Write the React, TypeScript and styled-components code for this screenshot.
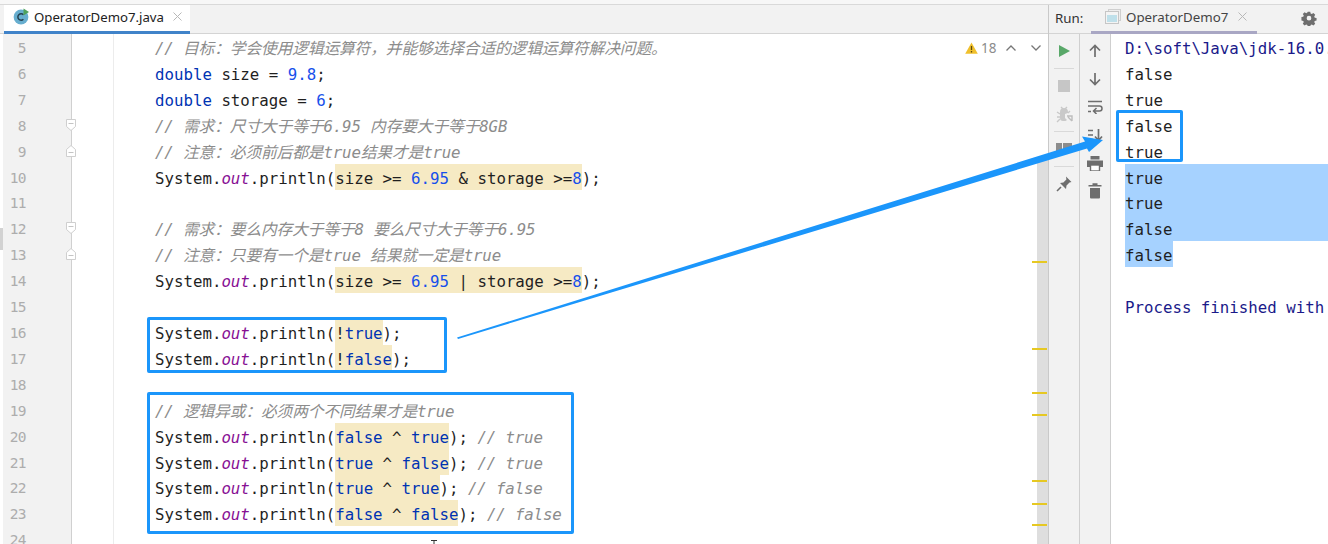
import React from "react";
import styled, { createGlobalStyle } from "styled-components";

const Global = createGlobalStyle`
  html, body { margin: 0; padding: 0; background: #fff; }
`;

const uiFont = `"Noto Sans", "Open Sans", sans-serif`;
const monoFont = `"DejaVu Sans Mono", "Noto Sans CJK SC", monospace`;
const blue = "#1b96fb";
const rowH = "25.92px";

const Page = styled.div`
  position: relative;
  width: 1328px;
  height: 544px;
  overflow: hidden;
  background: #fff;
  display: flex;
  flex-direction: column;
`;
const TopStrip = styled.div`
  height: 4px;
  flex: none;
  background: #f7f7f7;
  border-bottom: 1px solid #d9d9d9;
`;
const Panes = styled.div`
  flex: 1;
  display: flex;
  min-height: 0;
`;
const EditorPane = styled.section`
  position: relative;
  width: 1048px;
  flex: none;
  display: flex;
  flex-direction: column;
`;
const TabBar = styled.div`
  height: 29px;
  flex: none;
  box-sizing: border-box;
  padding-left: 4px;
  background: #f2f2f2;
  border-bottom: 1px solid #d4d4d4;
  display: flex;
`;
const FileTab = styled.div`
  width: 186px;
  height: 29px;
  box-sizing: border-box;
  padding: 0 7px 3px 9px;
  background: #fff;
  border-bottom: 3px solid #4083c9;
  display: flex;
  align-items: center;
  color: #222;
  font: 13.2px ${uiFont};
`;
const FileName = styled.span`
  margin-left: 4px;
  flex: 1;
`;
const EditorBody = styled.div`
  flex: 1;
  display: flex;
  min-height: 0;
  overflow: hidden;
`;
const LeftRail = styled.div`
  width: 3px;
  flex: none;
  padding-top: 194px;
`;
const RailGrip = styled.div`
  height: 22px;
  background: #d2d2d2;
`;
const Gutter = styled.div`
  width: 68px;
  flex: none;
  background: #f2f2f2;
  border-right: 1px solid #d0d0d0;
`;
const GutterRow = styled.div`
  position: relative;
  height: ${rowH};
  box-sizing: border-box;
  width: 23px;
  text-align: right;
  color: #adadad;
  font: 14.5px/28px ${monoFont};
  letter-spacing: -0.6px;
`;
const FoldMark = styled.svg`
  position: absolute;
  left: 62px;
  top: 6px;
`;
const Code = styled.div`
  position: relative;
  flex: 1;
  padding-left: 83px;
  font: 15.75px/29px ${monoFont};
  color: #1f1f1f;
  white-space: pre;
  &::before {
    content: "";
    position: absolute;
    left: 41px;
    top: 0;
    bottom: 0;
    width: 1px;
    background: #ececec;
  }
`;
const Line = styled.div`
  height: ${rowH};
`;
const Comment = styled.span`
  color: #8c8c8c;
  font-style: italic;
  letter-spacing: -0.15px;
`;
const Keyword = styled.span`
  color: #0033b3;
`;
const Num = styled.span`
  color: #1750eb;
`;
const Field = styled.span`
  color: #871094;
  font-style: italic;
`;
const Hl = styled.span`
  display: inline-block;
  height: 26px;
  background: #f6eac4;
`;
const Inspections = styled.div`
  position: absolute;
  top: 30px;
  left: 965px;
  height: 26px;
  display: flex;
  align-items: center;
  color: #8c8c8c;
  font: 13.5px ${uiFont};
`;
const WarnCount = styled.span`
  margin: 0 9px 0 3px;
`;
const Chevron = styled.svg`
  margin-right: 13px;
`;
const ScrollThumb = styled.div`
  position: absolute;
  top: 152px;
  bottom: 0;
  left: 1037px;
  width: 11px;
  background: #dedede;
`;
const Mark = styled.div<{ $y: number }>`
  position: absolute;
  left: 1032px;
  top: ${(p) => p.$y - 5}px;
  width: 15px;
  height: 2px;
  background: #e6c822;
`;
const RunPane = styled.section`
  flex: 1;
  min-width: 0;
  display: flex;
  flex-direction: column;
  border-left: 1px solid #c9c9c9;
`;
const RunHeader = styled.div`
  height: 29px;
  flex: none;
  box-sizing: border-box;
  padding-left: 6px;
  background: #f2f2f2;
  border-bottom: 1px solid #d4d4d4;
  display: flex;
  align-items: center;
  color: #333;
  font: 13.3px ${uiFont};
`;
const RunLabel = styled.span`
  width: 36px;
  padding-bottom: 2px;
`;
const RunTab = styled.div`
  width: 166px;
  height: 29px;
  box-sizing: border-box;
  padding: 0 9px 2px 14px;
  border-bottom: 3px solid #a9a7c4;
  display: flex;
  align-items: center;
  color: #444;
`;
const RunTabName = styled.span`
  margin-left: 5px;
  flex: 1;
`;
const Gear = styled.svg`
  margin-left: 44px;
  margin-bottom: 2px;
`;
const RunBody = styled.div`
  flex: 1;
  display: flex;
  min-height: 0;
`;
const ToolColumn = styled.div`
  width: 30px;
  flex: none;
  padding-top: 3px;
  background: #f2f2f2;
  border-right: 1px solid #cfcfcf;
`;
const ToolSlot = styled.div`
  height: 28px;
  display: flex;
  align-items: center;
  justify-content: center;
`;
const ToolSep = styled.div`
  height: 1px;
  margin: 3px 5px;
  background: #d9d9d9;
`;
const Console = styled.div`
  flex: 1;
  min-width: 0;
  padding-left: 14px;
  overflow: hidden;
  font: 15.75px/29px ${monoFont};
  color: #1f1f1f;
  white-space: pre;
`;
const ConsoleLine = styled.div<{ $sel?: boolean }>`
  height: ${rowH};
  background: ${(p) => (p.$sel ? "#a6d2ff" : "transparent")};
`;
const ConsoleLast = styled.div`
  height: ${rowH};
  width: 48px;
  background: #a6d2ff;
`;
const SystemLine = styled.div`
  height: ${rowH};
  color: #1a1a8a;
`;
const CalloutBox = styled.div<{ $x: number; $y: number; $w: number; $h: number }>`
  position: absolute;
  left: ${(p) => p.$x}px;
  top: ${(p) => p.$y}px;
  width: ${(p) => p.$w}px;
  height: ${(p) => p.$h}px;
  box-sizing: border-box;
  border: 3px solid ${blue};
  border-radius: 2px;
`;
const ArrowLayer = styled.svg`
  position: absolute;
  left: 0;
  top: 0;
  pointer-events: none;
`;

const Println = () => (
  <>
    System.<Field>out</Field>.println(
  </>
);

const FoldDown = () => (
  <FoldMark width="12" height="14" viewBox="0 0 12 14">
    <path d="M1.5 1.5h9v7L6 12.5 1.5 8.5z" fill="#fff" stroke="#cfcfcf" />
    <path d="M3.5 5.5h5" stroke="#c4c4c4" />
  </FoldMark>
);
const FoldUp = () => (
  <FoldMark width="12" height="14" viewBox="0 0 12 14">
    <path d="M1.5 12.5h9v-7L6 1.5 1.5 5.5z" fill="#fff" stroke="#cfcfcf" />
    <path d="M3.5 8.5h5" stroke="#c4c4c4" />
  </FoldMark>
);

const numbers = Array.from({ length: 20 }, (_, i) => i + 5);
const markYs = [261, 348, 392, 414, 480, 503, 524];

export default function App() {
  return (
    <Page>
      <Global />
      <TopStrip />
      <Panes>
        <EditorPane>
          <TabBar>
            <FileTab>
              <svg width="17" height="17" viewBox="0 0 17 17">
                <circle cx="8" cy="9" r="7.4" fill="#67aecf" />
                <path d="M10.4 6.8A3.2 3.2 0 1 0 10.4 11.2" fill="none" stroke="#24404f" strokeWidth="1.5" />
                <path d="M10.5 0.5l5.5 3.6-5.5 3.4z" fill="#4fa15c" />
              </svg>
              <FileName>OperatorDemo7.java</FileName>
              <svg width="11" height="11" viewBox="0 0 11 11">
                <path d="M1.5 1.5l8 8M9.5 1.5l-8 8" stroke="#b8b8b8" strokeWidth="1" />
              </svg>
            </FileTab>
          </TabBar>
          <EditorBody>
            <LeftRail>
              <RailGrip />
            </LeftRail>
            <Gutter>
              {numbers.map((n) => (
                <GutterRow key={n}>
                  {n}
                  {(n === 8 || n === 12) && <FoldDown />}
                  {(n === 9 || n === 13) && <FoldUp />}
                </GutterRow>
              ))}
            </Gutter>
            <Code>
              <Line><Comment>// 目标&#xFF1A;学会使用逻辑运算符&#xFF0C;并能够选择合适的逻辑运算符解决问题。</Comment></Line>
              <Line><Keyword>double</Keyword> size = <Num>9.8</Num>;</Line>
              <Line><Keyword>double</Keyword> storage = <Num>6</Num>;</Line>
              <Line><Comment>// 需求&#xFF1A;尺寸大于等于6.95 内存要大于等于8GB</Comment></Line>
              <Line><Comment>// 注意&#xFF1A;必须前后都是true结果才是true</Comment></Line>
              <Line><Println /><Hl>size &gt;= <Num>6.95</Num> &amp; storage &gt;=<Num>8</Num></Hl>);</Line>
              <Line />
              <Line><Comment>// 需求&#xFF1A;要么内存大于等于8 要么尺寸大于等于6.95</Comment></Line>
              <Line><Comment>// 注意&#xFF1A;只要有一个是true 结果就一定是true</Comment></Line>
              <Line><Println /><Hl>size &gt;= <Num>6.95</Num> | storage &gt;=<Num>8</Num></Hl>);</Line>
              <Line />
              <Line><Println /><Hl>!<Keyword>true</Keyword></Hl>);</Line>
              <Line><Println /><Hl>!<Keyword>false</Keyword></Hl>);</Line>
              <Line />
              <Line><Comment>// 逻辑异或&#xFF1A;必须两个不同结果才是true</Comment></Line>
              <Line><Println /><Hl><Keyword>false</Keyword> ^ <Keyword>true</Keyword></Hl>); <Comment>// true</Comment></Line>
              <Line><Println /><Hl><Keyword>true</Keyword> ^ <Keyword>false</Keyword></Hl>); <Comment>// true</Comment></Line>
              <Line><Println /><Hl><Keyword>true</Keyword> ^ <Keyword>true</Keyword></Hl>); <Comment>// false</Comment></Line>
              <Line><Println /><Hl><Keyword>false</Keyword> ^ <Keyword>false</Keyword></Hl>); <Comment>// false</Comment></Line>
              <Line />
            </Code>
          </EditorBody>
          <Inspections>
            <svg width="13" height="12" viewBox="0 0 13 12">
              <path d="M6.5 0.5L12.8 11.8H0.2z" fill="#f0c02c" />
              <path d="M6.5 4v4M6.5 9v1.6" stroke="#5c4a10" strokeWidth="1.3" />
            </svg>
            <WarnCount>18</WarnCount>
            <Chevron width="12" height="8" viewBox="0 0 12 8">
              <path d="M1.5 6.5L6 2l4.5 4.5" fill="none" stroke="#777" strokeWidth="1.3" />
            </Chevron>
            <Chevron width="12" height="8" viewBox="0 0 12 8">
              <path d="M1.5 1.5L6 6l4.5-4.5" fill="none" stroke="#777" strokeWidth="1.3" />
            </Chevron>
          </Inspections>
          <ScrollThumb />
          {markYs.map((y) => (
            <Mark key={y} $y={y} />
          ))}
        </EditorPane>
        <RunPane>
          <RunHeader>
            <RunLabel>Run:</RunLabel>
            <RunTab>
              <svg width="16" height="15" viewBox="0 0 16 15">
                <rect x="3.5" y="0.5" width="12" height="11" fill="#eeeeee" stroke="#cfcfcf" />
                <rect x="0.5" y="2.5" width="13" height="12" fill="#f4f4f4" stroke="#c6c6c6" />
                <rect x="2" y="6" width="10" height="7" fill="#bfe0ea" />
              </svg>
              <RunTabName>OperatorDemo7</RunTabName>
              <svg width="11" height="11" viewBox="0 0 11 11">
                <path d="M1.5 1.5l8 8M9.5 1.5l-8 8" stroke="#b8b8b8" strokeWidth="1" />
              </svg>
            </RunTab>
            <Gear width="16" height="16" viewBox="0 0 16 16">
              <path
                fillRule="evenodd"
                fill="#6e6e6e"
                d="M6.6 1h2.8l.4 2 1.3.6 1.8-1.1 2 2-1.1 1.8.6 1.3 2 .4v2.8l-2 .4-.6 1.3 1.1 1.8-2 2-1.8-1.1-1.3.6-.4 2H6.6l-.4-2-1.3-.6-1.8 1.1-2-2 1.1-1.8-.6-1.3-2-.4V7l2-.4.6-1.3-1.1-1.8 2-2 1.8 1.1 1.3-.6zM8 5.6a2.6 2.6 0 1 0 0 5.2 2.6 2.6 0 0 0 0-5.2z"
                transform="translate(0.8 0.8) scale(0.9)"
              />
            </Gear>
          </RunHeader>
          <RunBody>
            <ToolColumn>
              <ToolSlot>
                <svg width="14" height="14" viewBox="0 0 14 14"><path d="M2 1l11 6-11 6z" fill="#59a869" /></svg>
              </ToolSlot>
              <ToolSep />
              <ToolSlot>
                <svg width="12" height="12" viewBox="0 0 12 12"><rect width="12" height="12" fill="#c6c6c6" /></svg>
              </ToolSlot>
              <ToolSlot>
                <svg width="17" height="17" viewBox="0 0 17 17">
                  <path d="M4 6a4 4 0 0 1 8 0v1l-3 1v4l2 2-1.5 1H7a3 3 0 0 1-3-3z" fill="#c9c9c9" />
                  <path d="M1 6l3 2M1 11h3M1 16l3-3M14 5l-2 2M5 1l2 2M11 1L9 3" stroke="#c9c9c9" strokeWidth="1.4" fill="none" />
                  <path d="M11 10h5v5M16 15l-4-4" stroke="#bdbdbd" strokeWidth="1.4" fill="none" />
                </svg>
              </ToolSlot>
              <ToolSep />
              <ToolSlot>
                <svg width="16" height="12" viewBox="0 0 16 12">
                  <rect x="0" y="0" width="6" height="9" fill="#8c8c8c" />
                  <rect x="7" y="0" width="9" height="9" fill="#8c8c8c" />
                </svg>
              </ToolSlot>
              <ToolSep />
              <ToolSlot>
                <svg width="16" height="16" viewBox="0 0 16 16">
                  <path d="M10 0.5l5.5 5.5-2 .6-3 3-.5 3.4-6-6 3.4-.5 3-3z" fill="#6e6e6e" />
                  <path d="M5 11l-4 4" stroke="#6e6e6e" strokeWidth="1.6" />
                </svg>
              </ToolSlot>
            </ToolColumn>
            <ToolColumn>
              <ToolSlot>
                <svg width="14" height="14" viewBox="0 0 14 14">
                  <path d="M7 13V1.5M2 6.5l5-5 5 5" fill="none" stroke="#6e6e6e" strokeWidth="1.7" />
                </svg>
              </ToolSlot>
              <ToolSlot>
                <svg width="14" height="14" viewBox="0 0 14 14">
                  <path d="M7 1v11.5M2 7.5l5 5 5-5" fill="none" stroke="#6e6e6e" strokeWidth="1.7" />
                </svg>
              </ToolSlot>
              <ToolSlot>
                <svg width="16" height="14" viewBox="0 0 16 14">
                  <path d="M1 1.5h14M1 6h11.5a2.4 2.4 0 0 1 0 5H7M9.5 8L6.5 11l3 3M1 11.5h3" fill="none" stroke="#6e6e6e" strokeWidth="1.5" />
                </svg>
              </ToolSlot>
              <ToolSlot>
                <svg width="16" height="14" viewBox="0 0 16 14">
                  <path d="M1 2.5h5M1 7h5M1 11.5h5" stroke="#6e6e6e" strokeWidth="1.6" />
                  <path d="M11.5 1v11M8 8.5l3.5 4 3.5-4" fill="none" stroke="#6e6e6e" strokeWidth="1.7" />
                </svg>
              </ToolSlot>
              <ToolSlot>
                <svg width="16" height="15" viewBox="0 0 16 15">
                  <rect x="3.5" y="0" width="9" height="3.5" fill="#6e6e6e" />
                  <rect x="0" y="4.5" width="16" height="6.5" fill="#6e6e6e" />
                  <rect x="3.5" y="9" width="9" height="6" fill="#fff" stroke="#6e6e6e" strokeWidth="1.4" />
                </svg>
              </ToolSlot>
              <ToolSlot>
                <svg width="14" height="16" viewBox="0 0 14 16">
                  <path d="M0.5 2h13v1.6H.5zM4.5 0.3h5V2h-5z" fill="#6e6e6e" />
                  <path d="M2 5h10v9.5a1 1 0 0 1-1 1H3a1 1 0 0 1-1-1z" fill="#6e6e6e" />
                </svg>
              </ToolSlot>
            </ToolColumn>
            <Console>
              <SystemLine>D:\soft\Java\jdk-16.0.1\bin\java.exe</SystemLine>
              <ConsoleLine>false</ConsoleLine>
              <ConsoleLine>true</ConsoleLine>
              <ConsoleLine>false</ConsoleLine>
              <ConsoleLine>true</ConsoleLine>
              <ConsoleLine $sel>true</ConsoleLine>
              <ConsoleLine $sel>true</ConsoleLine>
              <ConsoleLine $sel>false</ConsoleLine>
              <ConsoleLast>false</ConsoleLast>
              <ConsoleLine />
              <SystemLine>Process finished with exit code 0</SystemLine>
            </Console>
          </RunBody>
        </RunPane>
      </Panes>
      <CalloutBox $x={147} $y={317} $w={300} $h={56} />
      <CalloutBox $x={147} $y={392} $w={427} $h={142} />
      <CalloutBox $x={1116} $y={110} $w={67} $h={52} />
      <ArrowLayer width="1328" height="544" viewBox="0 0 1328 544">
        <path d="M457 337.6L1085 141.5 1082 136.5 1103 140 1089 152 1087 148.5 458 339z" fill={blue} />
        <path d="M431 540.5h6M434 540.5v4" stroke="#333" strokeWidth="1" />
      </ArrowLayer>
    </Page>
  );
}
